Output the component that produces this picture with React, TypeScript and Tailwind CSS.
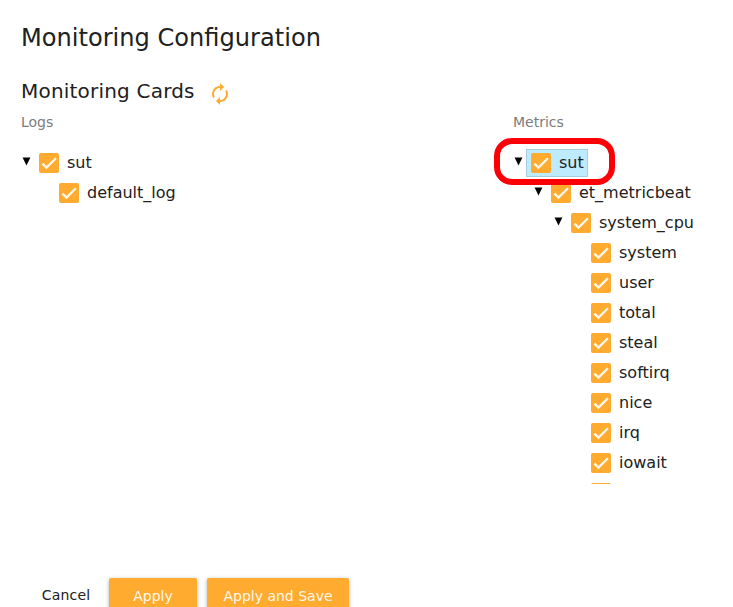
const checkPath = "M4.1,12.7 9,17.6 20.3,6.3";

type NodeData = { label: string; children?: NodeData[]; active?: boolean };

const logs: NodeData = { label: "sut", children: [{ label: "default_log" }] };

const metrics: NodeData = {
  label: "sut",
  active: true,
  children: [
    {
      label: "et_metricbeat",
      children: [
        {
          label: "system_cpu",
          children: ["system", "user", "total", "steal", "softirq", "nice", "irq", "iowait", ""].map((label) => ({ label })),
        },
      ],
    },
  ],
};

function Checkbox() {
  return (
    <span className="h-5 w-5 shrink-0 rounded-[2px] bg-[#ffab2f]">
      <svg viewBox="0 0 24 24" className="h-5 w-5" fill="none" stroke="#fff8ea" strokeWidth="2.8">
        <path d={checkPath} />
      </svg>
    </span>
  );
}

function TreeNode({ node }: { node: NodeData }) {
  return (
    <div>
      <div className="flex h-[30px] items-center">
        <span className="flex w-[13px] shrink-0 pb-1 pl-px">
          {node.children && (
            <svg width="9" height="9" viewBox="0 0 9 9" className="fill-black">
              <path d="M0.6 0.6h7.8L4.5 8.6z" />
            </svg>
          )}
        </span>
        <span
          className={`flex h-7 items-center gap-2 border pr-[3px] pl-1 ${
            node.active ? "border-[#a5cfe0] bg-[#beebff]" : "border-transparent"
          }`}
        >
          <Checkbox />
          <span className="whitespace-nowrap">{node.label}</span>
        </span>
      </div>
      {node.children && (
        <div className="pl-5">
          {node.children.map((child) => (
            <TreeNode key={child.label} node={child} />
          ))}
        </div>
      )}
    </div>
  );
}

function Button({ label, className }: { label: string; className: string }) {
  return (
    <button
      className={`h-9 rounded-[2px] bg-[#ffab2f] text-[14px] leading-9 text-[#fff8ea] shadow-[0_1px_4px_rgba(0,0,0,0.3)] ${className}`}
    >
      {label}
    </button>
  );
}

export default function App() {
  return (
    <main className="h-[607px] w-[733px] overflow-hidden bg-white pl-[21px] font-['DejaVu_Sans',sans-serif] text-[16px] text-[#212121]">
      <h1 className="pt-[22px] text-[24.1px] leading-8">Monitoring Configuration</h1>
      <div className="mt-[23px] flex h-7 items-center gap-[13px]">
        <h2 className="text-[20px] leading-7 tracking-[0.2px]">Monitoring Cards</h2>
        <svg viewBox="0 0 24 24" className="mt-1.5 h-6 w-6 fill-[#ffab2f]">
          <path d="M12 6v3l4-4-4-4v3c-4.42 0-8 3.58-8 8 0 1.57.46 3.03 1.24 4.26L6.7 14.8c-.45-.83-.7-1.79-.7-2.8 0-3.31 2.69-6 6-6zm6.76 1.74L17.3 9.2c.44.84.7 1.79.7 2.8 0 3.31-2.69 6-6 6v-3l-4 4 4 4v-3c4.42 0 8-3.58 8-8 0-1.57-.46-3.03-1.24-4.26z" />
        </svg>
      </div>
      <div className="mt-[7px] flex h-[372px]">
        <section className="w-[492px]">
          <h3 className="text-[14px] leading-5 text-[#7c7c7c]">Logs</h3>
          <div className="mt-4">
            <TreeNode node={logs} />
          </div>
        </section>
        <section className="w-[220px]">
          <h3 className="text-[14px] leading-5 text-[#7c7c7c]">Metrics</h3>
          <div className="relative mt-4">
            <div className="h-[336px] overflow-hidden">
              <TreeNode node={metrics} />
            </div>
            <div className="absolute -top-[10px] -left-[19px] h-[47px] w-[121px] rounded-[18px] border-[6px] border-[#fb0007]" />
          </div>
        </section>
      </div>
      <footer className="mt-[94px] flex gap-[10px] pl-1">
        <button className="h-9 w-[74px] pl-2 text-[14px] leading-[34px] tracking-[0.2px] whitespace-nowrap pb-0.5">Cancel</button>
        <Button label="Apply" className="w-[88px]" />
        <Button label="Apply and Save" className="w-[142px]" />
      </footer>
    </main>
  );
}
